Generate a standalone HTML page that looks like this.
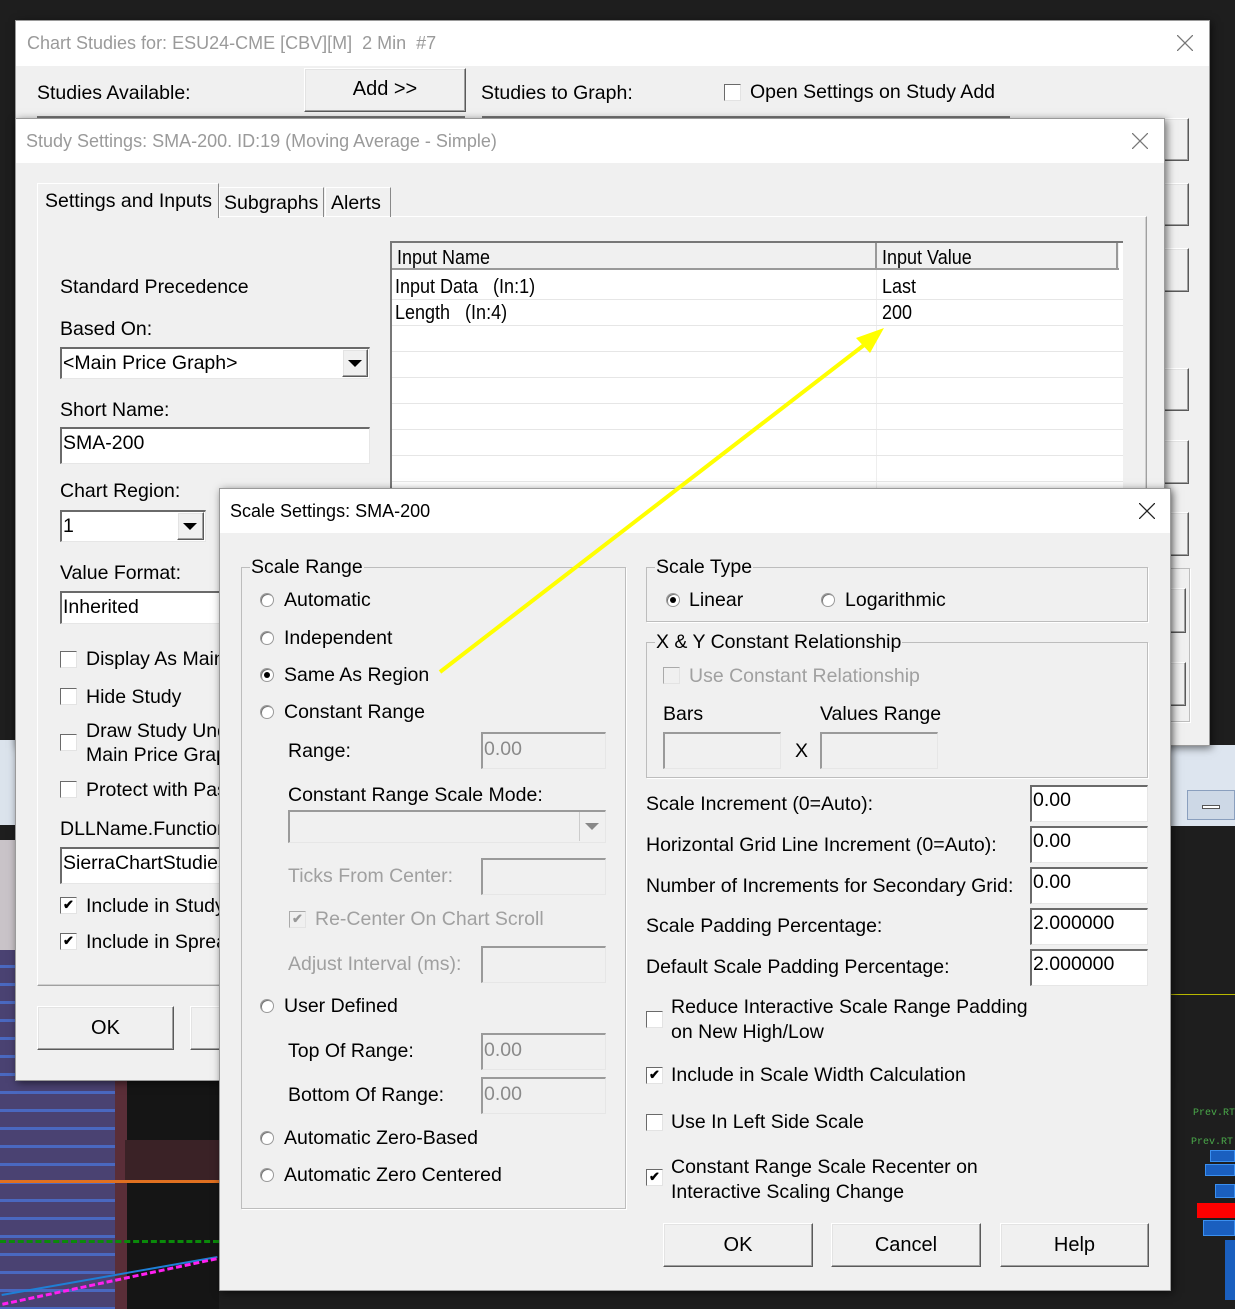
<!DOCTYPE html>
<html><head><meta charset="utf-8"><style>
*{margin:0;padding:0;box-sizing:border-box}
body{width:1235px;height:1309px;background:#1e1e1e;position:relative;overflow:hidden;font-family:"Liberation Sans",Arial,sans-serif}
div{position:absolute}
.w{background:#f0f0f0;border:1px solid #9a9a9a;box-shadow:2px 2px 8px rgba(0,0,0,.55)}
.tb{left:0;top:0;right:0;background:#fff}
.tt{font-size:18px;color:#9a9a9a;white-space:nowrap;line-height:24px}
.t{font-size:19.5px;line-height:24px;white-space:nowrap;color:#000}
.g{color:#a0a0a0}
.in{background:#fff;border-top:2px solid #6a6a6a;border-left:2px solid #6a6a6a;border-right:1px solid #e6e6e6;border-bottom:1px solid #e6e6e6;font-size:19.5px;line-height:28px;padding-left:1px;white-space:nowrap;overflow:hidden}
.in.d{background:#f0f0f0;color:#8a8a8a;border-top-color:#9a9a9a;border-left-color:#9a9a9a}
.btn{background:#f0f0f0;border:1px solid;border-color:#fff #5a5a5a #5a5a5a #fff;box-shadow:inset -1px -1px #a0a0a0,inset 1px 1px #e3e3e3;font-size:20px;text-align:center;color:#000}
.cb{width:17px;height:17px;background:#fff;border:1px solid;border-color:#6a6a6a #e3e3e3 #e3e3e3 #6a6a6a;font-size:13px;line-height:14px;text-align:center;font-weight:bold}
.rb{width:14px;height:14px;border-radius:50%;background:#fff;border:1px solid #9a9a9a;box-shadow:inset 1px 1px #777}
.rb.on::after{content:"";position:absolute;left:3px;top:3px;width:6px;height:6px;border-radius:50%;background:#000}
.gb{border:1px solid #bdbdbd;box-shadow:1px 1px #fff}
.lg{background:#f0f0f0;font-size:19.5px;line-height:24px;padding:0 1px;white-space:nowrap}
.n{font-family:"Liberation Sans Narrow","Liberation Sans",sans-serif;font-size:20px;line-height:24px;white-space:nowrap;transform:scaleX(.9);transform-origin:left}
.hl{height:1px;background:#e6e6e6}
.tri{width:0;height:0;border-left:7px solid transparent;border-right:7px solid transparent;border-top:7px solid #000}
</style></head><body>

<div style="left:0;top:740px;width:15px;height:85px;background:#dbe3ec"></div>
<div style="left:0;top:840px;width:15px;height:110px;background:#c9c3c8"></div>
<div style="left:0;top:950px;width:115px;height:359px;background:#4a4272;background-image:repeating-linear-gradient(180deg,transparent 0 15px,#4a68c0 15px 18px)"></div>
<div style="left:115px;top:1080px;width:12px;height:229px;background:#5a2e38"></div>
<div style="left:127px;top:1080px;width:92px;height:229px;background:#151515"></div>
<div style="left:125px;top:1140px;width:95px;height:40px;background:#3a2226"></div>
<div style="left:0;top:1275px;width:219px;height:2px;background:#1e7fd6;transform:rotate(-10deg)"></div>
<div style="left:0;top:1180px;width:219px;height:3px;background:#e07020"></div>
<div style="left:0;top:1240px;width:219px;height:3px;border-top:3px dashed #0a8a0a"></div>
<div style="left:0;top:1280px;width:219px;height:3px;border-top:3px dashed #ff1ff0;transform:rotate(-12deg)"></div>
<div style="left:1170px;top:745px;width:65px;height:81px;background:#dde5ef"></div>
<div style="left:1187px;top:790px;width:48px;height:30px;background:#cdd8e6;border:1px solid #8a9fbe"></div>
<div style="left:1202px;top:805px;width:18px;height:4px;border:1px solid #555;background:#fff"></div>
<div style="left:1170px;top:994px;width:65px;height:1px;background:#b8b800"></div>
<div style="left:1193px;top:1108px;font:10px 'Liberation Mono';color:#4aaa4a">Prev.RT</div>
<div style="left:1191px;top:1137px;font:10px 'Liberation Mono';color:#4aaa4a">Prev.RT</div>
<div style="left:1210px;top:1150px;width:25px;height:12px;background:#1a5fbf;border:1px solid #3a8ff0"></div>
<div style="left:1205px;top:1164px;width:30px;height:12px;background:#1a5fbf;border:1px solid #3a8ff0"></div>
<div style="left:1215px;top:1184px;width:20px;height:14px;background:#1a5fbf;border:1px solid #3a8ff0"></div>
<div style="left:1197px;top:1203px;width:38px;height:15px;background:#f00"></div>
<div style="left:1203px;top:1220px;width:32px;height:16px;background:#1a5fbf;border:1px solid #3a8ff0"></div>
<div style="left:1225px;top:1240px;width:10px;height:60px;background:#1a5fbf"></div>

<!-- Window 1 -->
<div class="w" style="left:15px;top:20px;width:1195px;height:726px">
 <div class="tb" style="height:45px"></div>
 <div class="tt" style="left:11px;top:10px">Chart Studies for: ESU24-CME [CBV][M]&nbsp; 2 Min&nbsp; #7</div>
 <svg style="position:absolute;left:1161px;top:14px" width="16" height="16"><path d="M0 0L16 16M16 0L0 16" stroke="#777" stroke-width="1.3"/></svg>
 <div class="t" style="left:21px;top:60px">Studies Available:</div>
 <div class="btn" style="left:288px;top:47px;width:162px;height:44px;line-height:40px">Add &gt;&gt;</div>
 <div class="t" style="left:465px;top:60px">Studies to Graph:</div>
 <div class="cb" style="left:708px;top:63px"></div>
 <div class="t" style="left:734px;top:59px">Open Settings on Study Add</div>
 <div style="left:21px;top:95px;width:428px;height:5px;border-top:2px solid #777"></div>
 <div style="left:466px;top:95px;width:528px;height:5px;border-top:2px solid #777"></div>
 <div class="btn" style="left:1120px;top:97px;width:53px;height:43px"></div>
 <div class="btn" style="left:1120px;top:162px;width:53px;height:43px"></div>
 <div class="btn" style="left:1120px;top:227px;width:53px;height:44px"></div>
 <div class="btn" style="left:1120px;top:347px;width:53px;height:43px"></div>
 <div class="btn" style="left:1120px;top:419px;width:53px;height:44px"></div>
 <div class="btn" style="left:1120px;top:491px;width:53px;height:44px"></div>
 <div class="gb" style="left:1120px;top:547px;width:54px;height:154px"></div>
 <div class="btn" style="left:1120px;top:567px;width:50px;height:45px"></div>
 <div class="btn" style="left:1120px;top:641px;width:50px;height:44px"></div>
</div>

<!-- Window 2 -->
<div class="w" style="left:15px;top:118px;width:1150px;height:963px">
 <div class="tb" style="height:44px"></div>
 <div class="tt" style="left:10px;top:10px">Study Settings: SMA-200. ID:19 (Moving Average - Simple)</div>
 <svg style="position:absolute;left:1116px;top:14px" width="16" height="16"><path d="M0 0L16 16M16 0L0 16" stroke="#777" stroke-width="1.3"/></svg>
 <div style="left:21px;top:97px;width:1110px;height:770px;border:1px solid #fff;border-right-color:#a0a0a0;border-bottom-color:#a0a0a0;box-shadow:inset -1px -1px #d0d0d0"></div>
 <div style="left:21px;top:64px;width:182px;height:35px;background:#f0f0f0;border:1px solid #fff;border-bottom:none;border-right:1px solid #888"></div>
 <div class="t" style="left:29px;top:70px">Settings and Inputs</div>
 <div style="left:203px;top:68px;width:105px;height:30px;border:1px solid #fff;border-bottom:none;border-right:1px solid #888"></div>
 <div class="t" style="left:208px;top:72px">Subgraphs</div>
 <div style="left:309px;top:68px;width:66px;height:30px;border:1px solid #fff;border-bottom:none;border-right:1px solid #888"></div>
 <div class="t" style="left:315px;top:72px">Alerts</div>
 <div style="left:374px;top:122px;width:733px;height:250px;background:#fff;border-top:2px solid #777;border-left:2px solid #777">
  <div style="left:0;top:0;width:727px;height:27px;background:#f0f0f0;border-bottom:2px solid #999"></div>
  <div style="left:483px;top:0;width:2px;height:27px;background:#999"></div>
  <div style="left:484px;top:27px;width:1px;height:223px;background:#eee"></div>
  <div style="left:724px;top:0;width:2px;height:27px;background:#999"></div>
  <div class="n" style="left:5px;top:3px">Input Name</div>
  <div class="n" style="left:490px;top:3px">Input Value</div>
  <div class="n" style="left:3px;top:32px">Input Data&nbsp;&nbsp; (In:1)</div>
  <div class="n" style="left:490px;top:32px">Last</div>
  <div class="n" style="left:3px;top:58px">Length&nbsp;&nbsp; (In:4)</div>
  <div class="n" style="left:490px;top:58px">200</div>
  <div class="hl" style="left:0;top:56px;width:731px"></div>
  <div class="hl" style="left:0;top:82px;width:731px"></div>
  <div class="hl" style="left:0;top:108px;width:731px"></div>
  <div class="hl" style="left:0;top:134px;width:731px"></div>
  <div class="hl" style="left:0;top:160px;width:731px"></div>
  <div class="hl" style="left:0;top:186px;width:731px"></div>
  <div class="hl" style="left:0;top:212px;width:731px"></div>
  <div class="hl" style="left:0;top:238px;width:731px"></div>
 </div>
 <div class="t" style="left:44px;top:156px">Standard Precedence</div>
 <div class="t" style="left:44px;top:198px">Based On:</div>
 <div class="in" style="left:44px;top:228px;width:310px;height:32px">&lt;Main Price Graph&gt;</div>
 <div class="btn" style="left:326px;top:230px;width:26px;height:28px"><div class="tri" style="left:5px;top:10px"></div></div>
 <div class="t" style="left:44px;top:279px">Short Name:</div>
 <div class="in" style="left:44px;top:308px;width:310px;height:37px">SMA-200</div>
 <div class="t" style="left:44px;top:360px">Chart Region:</div>
 <div class="in" style="left:44px;top:391px;width:146px;height:32px">1</div>
 <div class="btn" style="left:161px;top:393px;width:27px;height:28px"><div class="tri" style="left:5px;top:10px"></div></div>
 <div class="t" style="left:44px;top:442px">Value Format:</div>
 <div class="in" style="left:44px;top:472px;width:200px;height:33px">Inherited</div>
 <div class="cb" style="left:44px;top:532px"></div><div class="t" style="left:70px;top:528px">Display As Main</div>
 <div class="cb" style="left:44px;top:569px"></div><div class="t" style="left:70px;top:566px">Hide Study</div>
 <div class="cb" style="left:44px;top:615px"></div><div class="t" style="left:70px;top:600px;line-height:24px">Draw Study Under<br>Main Price Graph</div>
 <div class="cb" style="left:44px;top:662px"></div><div class="t" style="left:70px;top:659px">Protect with Password</div>
 <div class="t" style="left:44px;top:698px">DLLName.Function</div>
 <div class="in" style="left:44px;top:728px;width:200px;height:37px">SierraChartStudies</div>
 <div class="cb" style="left:44px;top:778px">✔</div><div class="t" style="left:70px;top:775px">Include in Study Summary</div>
 <div class="cb" style="left:44px;top:814px">✔</div><div class="t" style="left:70px;top:811px">Include in Spreadsheet</div>
 <div class="btn" style="left:21px;top:887px;width:137px;height:44px;line-height:42px">OK</div>
 <div class="btn" style="left:174px;top:887px;width:137px;height:44px"></div>
</div>

<!-- Window 3 -->
<div class="w" style="left:219px;top:488px;width:952px;height:803px">
 <div class="tb" style="height:44px"></div>
 <div style="left:10px;top:10px;font-size:18px;line-height:24px;color:#000">Scale Settings: SMA-200</div>
 <svg style="position:absolute;left:919px;top:14px" width="16" height="16"><path d="M0 0L16 16M16 0L0 16" stroke="#222" stroke-width="1.3"/></svg>
 <div class="gb" style="left:21px;top:78px;width:385px;height:642px"></div>
 <div class="lg" style="left:30px;top:66px">Scale Range</div>
 <div class="rb" style="left:40px;top:104px"></div><div class="t" style="left:64px;top:99px">Automatic</div>
 <div class="rb" style="left:40px;top:142px"></div><div class="t" style="left:64px;top:137px">Independent</div>
 <div class="rb on" style="left:40px;top:179px"></div><div class="t" style="left:64px;top:174px">Same As Region</div>
 <div class="rb" style="left:40px;top:216px"></div><div class="t" style="left:64px;top:211px">Constant Range</div>
 <div class="t" style="left:68px;top:250px">Range:</div>
 <div class="in d" style="left:261px;top:243px;width:125px;height:37px;line-height:30px">0.00</div>
 <div class="t" style="left:68px;top:294px">Constant Range Scale Mode:</div>
 <div class="in d" style="left:68px;top:321px;width:318px;height:33px"></div>
 <div style="left:359px;top:323px;width:25px;height:29px;border-left:1px solid #ccc"><div class="tri" style="left:5px;top:11px;border-top-color:#888"></div></div>
 <div class="t g" style="left:68px;top:375px">Ticks From Center:</div>
 <div class="in d" style="left:261px;top:369px;width:125px;height:37px"></div>
 <div class="cb" style="left:69px;top:422px;background:#f0f0f0;color:#999;border-color:#aaa #e3e3e3 #e3e3e3 #aaa">✔</div>
 <div class="t g" style="left:95px;top:418px">Re-Center On Chart Scroll</div>
 <div class="t g" style="left:68px;top:463px">Adjust Interval (ms):</div>
 <div class="in d" style="left:261px;top:457px;width:125px;height:37px"></div>
 <div class="rb" style="left:40px;top:510px"></div><div class="t" style="left:64px;top:505px">User Defined</div>
 <div class="t" style="left:68px;top:550px">Top Of Range:</div>
 <div class="in d" style="left:261px;top:544px;width:125px;height:37px;line-height:30px">0.00</div>
 <div class="t" style="left:68px;top:594px">Bottom Of Range:</div>
 <div class="in d" style="left:261px;top:588px;width:125px;height:37px;line-height:30px">0.00</div>
 <div class="rb" style="left:40px;top:642px"></div><div class="t" style="left:64px;top:637px">Automatic Zero-Based</div>
 <div class="rb" style="left:40px;top:679px"></div><div class="t" style="left:64px;top:674px">Automatic Zero Centered</div>
 <div class="gb" style="left:426px;top:78px;width:502px;height:55px"></div>
 <div class="lg" style="left:435px;top:66px">Scale Type</div>
 <div class="rb on" style="left:446px;top:104px"></div><div class="t" style="left:469px;top:99px">Linear</div>
 <div class="rb" style="left:601px;top:104px"></div><div class="t" style="left:625px;top:99px">Logarithmic</div>
 <div class="gb" style="left:426px;top:153px;width:502px;height:136px"></div>
 <div class="lg" style="left:435px;top:141px">X &amp; Y Constant Relationship</div>
 <div class="cb" style="left:443px;top:178px;background:#f0f0f0;border-color:#aaa #e3e3e3 #e3e3e3 #aaa"></div>
 <div class="t g" style="left:469px;top:175px">Use Constant Relationship</div>
 <div class="t" style="left:443px;top:213px">Bars</div>
 <div class="t" style="left:600px;top:213px">Values Range</div>
 <div class="in d" style="left:443px;top:243px;width:118px;height:37px"></div>
 <div class="t" style="left:575px;top:250px">X</div>
 <div class="in d" style="left:600px;top:243px;width:118px;height:37px"></div>
 <div class="t" style="left:426px;top:303px">Scale Increment (0=Auto):</div>
 <div class="in" style="left:810px;top:296px;width:118px;height:37px;line-height:26px">0.00</div>
 <div class="t" style="left:426px;top:344px">Horizontal Grid Line Increment (0=Auto):</div>
 <div class="in" style="left:810px;top:337px;width:118px;height:37px;line-height:26px">0.00</div>
 <div class="t" style="left:426px;top:385px">Number of Increments for Secondary Grid:</div>
 <div class="in" style="left:810px;top:378px;width:118px;height:37px;line-height:26px">0.00</div>
 <div class="t" style="left:426px;top:425px">Scale Padding Percentage:</div>
 <div class="in" style="left:810px;top:419px;width:118px;height:37px;line-height:26px">2.000000</div>
 <div class="t" style="left:426px;top:466px">Default Scale Padding Percentage:</div>
 <div class="in" style="left:810px;top:460px;width:118px;height:37px;line-height:26px">2.000000</div>
 <div class="cb" style="left:426px;top:522px"></div><div class="t" style="left:451px;top:506px;line-height:25px">Reduce Interactive Scale Range Padding<br>on New High/Low</div>
 <div class="cb" style="left:426px;top:578px">✔</div><div class="t" style="left:451px;top:574px">Include in Scale Width Calculation</div>
 <div class="cb" style="left:426px;top:625px"></div><div class="t" style="left:451px;top:621px">Use In Left Side Scale</div>
 <div class="cb" style="left:426px;top:680px">✔</div><div class="t" style="left:451px;top:666px;line-height:25px">Constant Range Scale Recenter on<br>Interactive Scaling Change</div>
 <div class="btn" style="left:443px;top:734px;width:150px;height:44px;line-height:42px">OK</div>
 <div class="btn" style="left:611px;top:734px;width:150px;height:44px;line-height:42px">Cancel</div>
 <div class="btn" style="left:780px;top:734px;width:149px;height:44px;line-height:42px">Help</div>
</div>

<svg style="position:absolute;left:0;top:0" width="1235" height="1309">
 <line x1="440" y1="672" x2="868" y2="342" stroke="#ffff00" stroke-width="4"/>
 <polygon points="884,328 856,338 870,353" fill="#ffff00"/>
</svg>
</body></html>
